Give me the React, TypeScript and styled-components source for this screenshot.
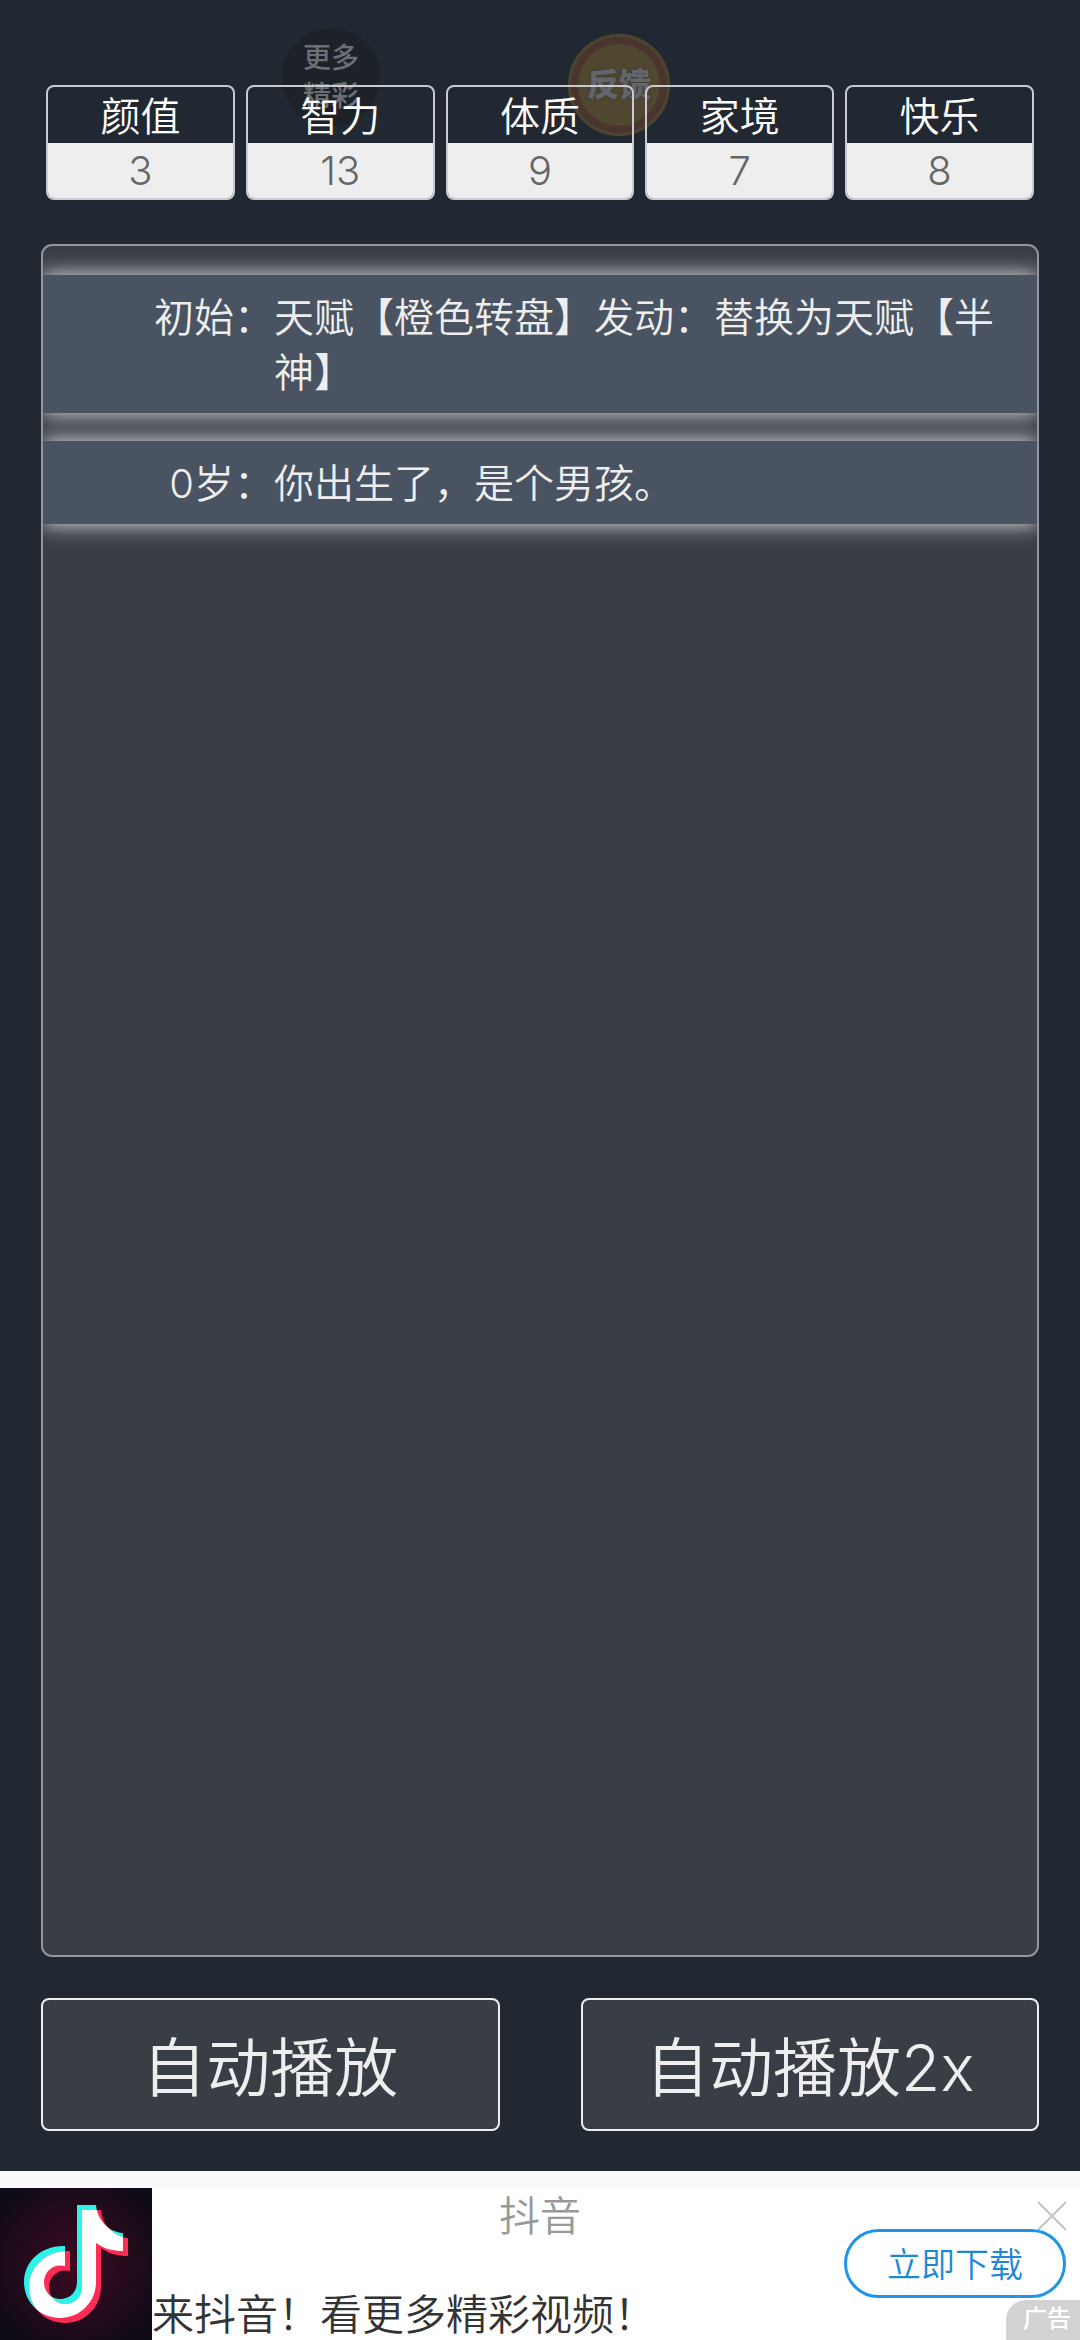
import React from "react";
import styled, { createGlobalStyle } from "styled-components";

const sans = `Inter, "Noto Sans CJK SC", "Noto Sans", sans-serif`;

const GlobalStyle = createGlobalStyle`
  * { box-sizing: border-box; }
  body { margin: 0; background: #fafafa; font-family: ${sans}; font-weight: 350; }
  button { font: inherit; cursor: pointer; padding: 0; }
`;

const Page = styled.div`
  display: flex;
  flex-direction: column;
  min-height: 100vh;
`;

const Game = styled.main`
  position: relative;
  isolation: isolate;
  flex: 1;
  display: flex;
  flex-direction: column;
  gap: 41px;
  padding: 85px 41px 40px;
  background: #222831;
`;

const Floating = styled.button`
  position: absolute;
  z-index: -1;
  display: flex;
  align-items: center;
  justify-content: center;
  border: 0;
  border-radius: 50%;
`;

const MoreBubble = styled(Floating)`
  top: 28px;
  left: 282px;
  width: 98px;
  height: 98px;
  background: #1d2128;
  color: #6c7076;
  font-size: 28px;
  font-weight: 500;
  line-height: 38px;
`;

const FeedbackBubble = styled(Floating)`
  top: 34px;
  left: 568px;
  width: 102px;
  height: 102px;
  background: #4f472f;
  box-shadow: inset 0 0 0 3px #4a4431, inset 0 0 0 10px #4a342e;
  color: #62656d;
  font-size: 32px;
  font-weight: 900;
  line-height: 38px;
  text-shadow: 0 0 3px #3d3a38;
`;

const Stats = styled.dl`
  display: grid;
  grid-template-columns: repeat(5, 1fr);
  gap: 11px;
  margin: 0;
  padding: 0 5px;
`;

const Stat = styled.div`
  border: 2px solid #c9cad2;
  border-radius: 8px;
  overflow: hidden;
  text-align: center;
  font-size: 40px;
`;

const StatName = styled.dt`
  padding-top: 4px;
  line-height: 52px;
  color: #fff;
`;

const StatValue = styled.dd`
  margin: 0;
  line-height: 55px;
  background: #eee;
  color: #666;
`;

const Log = styled.ol`
  flex: 1;
  display: flex;
  flex-direction: column;
  gap: 28px;
  margin: 3px 0 0;
  padding: 29px 0;
  list-style: none;
  overflow: hidden;
  border: 2px solid #94969b;
  border-radius: 11px;
  background: #393d46;
`;

const Entry = styled.li`
  display: flex;
  padding: 15px 38px 13px 0;
  background: #4a5361;
  box-shadow: 0 0 20px #eee;
  color: #eee;
  font-size: 40px;
  line-height: 55px;
`;

const EntryAge = styled.span`
  flex: 0 0 231px;
  text-align: right;
`;

const Actions = styled.div`
  display: grid;
  grid-template-columns: 1fr 1fr;
  gap: 81px;
`;

const PlayButton = styled.button`
  height: 133px;
  padding-bottom: 4px;
  border: 2px solid #eee;
  border-radius: 8px;
  background: #393d46;
  color: #eee;
  font-size: 64px;
`;

const Ad = styled.aside`
  position: relative;
  display: flex;
  height: 152px;
  margin-top: 17px;
  background: #fff;
`;

const Logo = styled.svg`
  flex: none;
  width: 152px;
  height: 152px;
`;

const AdText = styled.div`
  flex: 1;
  display: flex;
  flex-direction: column;
  justify-content: space-between;
`;

const AdTitle = styled.div`
  padding-right: 152px;
  text-align: center;
  font-size: 41px;
  line-height: 56px;
  color: #999;
`;

const AdCopy = styled.div`
  font-size: 42px;
  line-height: 50px;
  color: #333;
`;

const Download = styled.button`
  position: absolute;
  top: 41px;
  right: 14px;
  width: 222px;
  height: 69px;
  padding-bottom: 2px;
  border: 3px solid #1e96e8;
  border-radius: 35px;
  background: #fff;
  color: #1e88d8;
  font-size: 34px;
`;

const Close = styled.button`
  position: absolute;
  top: 12px;
  right: 12px;
  width: 32px;
  height: 32px;
  border: 0;
  background: none;
  color: #c4c4c4;
  svg { display: block; }
`;

const AdTag = styled.span`
  position: absolute;
  right: 0;
  bottom: 0;
  width: 74px;
  height: 40px;
  padding-left: 8px;
  border-top-left-radius: 20px;
  background: #d3d3d3;
  color: #fff;
  font-size: 24px;
  font-weight: 500;
  line-height: 38px;
  text-align: center;
`;

const stats = [
  ["颜值", 3],
  ["智力", 13],
  ["体质", 9],
  ["家境", 7],
  ["快乐", 8],
];

const entries = [
  ["初始：", "天赋【橙色转盘】发动：替换为天赋【半神】"],
  ["0岁：", "你出生了，是个男孩。"],
];

const note =
  "M77 17H96C97 31 108 44 123 45V63C113 63 104 61 96 55V94C96 114 80 130 60 130C40 130 24 114 24 94C24 74 41 57 65 58V78C53 75 44 84 44 94C44 104 51 111 60 111C70 111 77 104 77 94Z";

function AdLogo() {
  return (
    <Logo viewBox="0 0 152 152" role="img" aria-label="抖音">
      <defs>
        <radialGradient id="glow" r="0.65">
          <stop offset="0" stopColor="#3d0a22" />
          <stop offset="1" stopColor="#0e0b16" />
        </radialGradient>
        <clipPath id="note">
          <path d={note} />
        </clipPath>
      </defs>
      <rect width="152" height="152" fill="url(#glow)" />
      <path d={note} fill="#2bf3ea" />
      <path d={note} fill="#fe2c55" transform="translate(5 5)" />
      <g clipPath="url(#note)">
        <path d={note} fill="#fff" transform="translate(5 5)" />
      </g>
    </Logo>
  );
}

export default function App() {
  return (
    <Page>
      <GlobalStyle />
      <Game>
        <MoreBubble>更多<br />精彩</MoreBubble>
        <FeedbackBubble>反馈</FeedbackBubble>
        <Stats>
          {stats.map(([name, value]) => (
            <Stat key={name}>
              <StatName>{name}</StatName>
              <StatValue>{value}</StatValue>
            </Stat>
          ))}
        </Stats>
        <Log>
          {entries.map(([age, text]) => (
            <Entry key={age}>
              <EntryAge>{age}</EntryAge>
              <span>{text}</span>
            </Entry>
          ))}
        </Log>
        <Actions>
          <PlayButton>自动播放</PlayButton>
          <PlayButton>自动播放2x</PlayButton>
        </Actions>
      </Game>
      <Ad>
        <AdLogo />
        <AdText>
          <AdTitle>抖音</AdTitle>
          <AdCopy>来抖音！看更多精彩视频！</AdCopy>
        </AdText>
        <Close aria-label="关闭">
          <svg viewBox="0 0 32 32" width="32" height="32" stroke="currentColor" strokeWidth="2">
            <path d="M2 2L30 30M30 2L2 30" />
          </svg>
        </Close>
        <Download>立即下载</Download>
        <AdTag>广告</AdTag>
      </Ad>
    </Page>
  );
}
